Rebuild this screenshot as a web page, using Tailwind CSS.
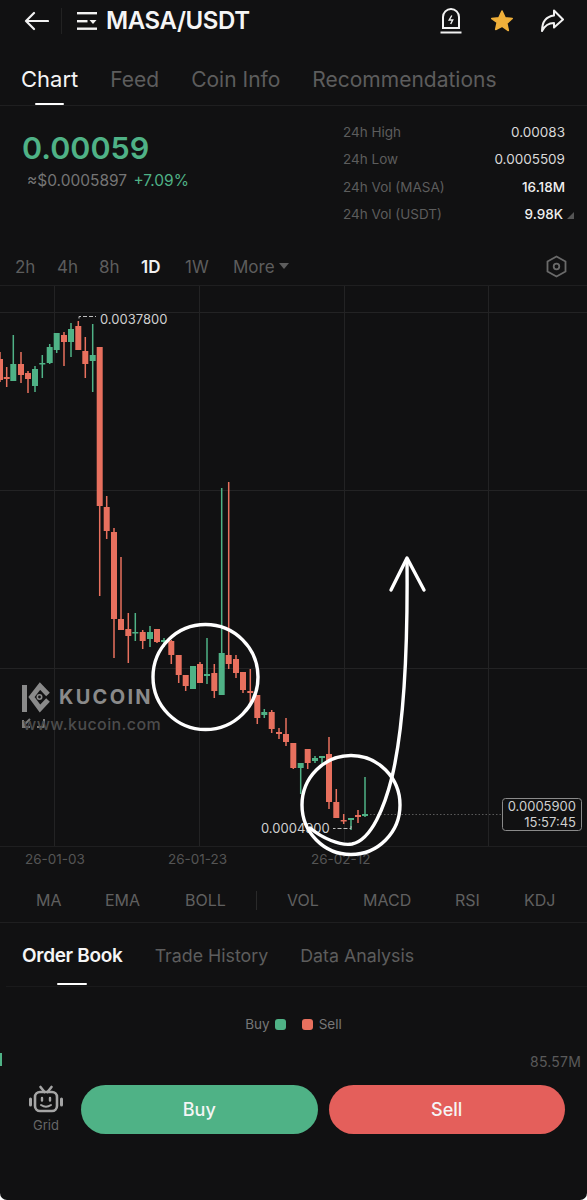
<!DOCTYPE html>
<html lang="en">
<head>
  <meta charset="UTF-8" />
  <meta name="viewport" content="width=device-width, initial-scale=1.0"/>
  <title>MASA/USDT</title>
  <script src="https://cdn.jsdelivr.net/npm/@tailwindcss/browser@4"></script>
</head>
<body class="bg-white text-white font-[Inter,sans-serif]">
<div class="w-[587px] h-[1200px] overflow-hidden flex flex-col bg-[#111112] rounded-b-[7px]">

  <!-- Header -->
  <header class="h-[42px] flex items-center pl-[24px] pr-[23px]">
    <svg class="w-[25px] h-[20px]" viewBox="0 0 25 20" fill="none" stroke="#f2f2f2" stroke-width="2.2" stroke-linecap="round" stroke-linejoin="round"><path d="M24 10H2M10 2l-8 8 8 8"/></svg>
    <div class="w-px h-[26px] bg-[#222] ml-[12px] mr-[15px]"></div>
    <svg class="w-[20px] h-[20px]" viewBox="0 0 20 20" fill="#f2f2f2"><rect x="0" y="1" width="20" height="2.4"/><rect x="0" y="9" width="10.5" height="2.4"/><path d="M12.5 9h7l-3.500 4z"/><rect x="0" y="16.500" width="20" height="2.4"/></svg>
    <h1 class="ml-[9px] text-[24px] font-semibold tracking-[-0.4px] text-[#f5f5f5]">MASA/USDT</h1>
    <div class="ml-auto flex items-center gap-[27px]">
      <svg class="w-[22px] h-[26px]" viewBox="0 0 22 26" fill="none" stroke="#f2f2f2" stroke-width="2"><path d="M3 20V9a8 8 0 0 1 16 0v11z"/><path d="M0.500 24.500h21"/><path d="M11.800 7.500 9.200 12h3.500l-2 4" stroke-width="1.400"/></svg>
      <svg class="w-[24px] h-[24px] ml-[1px]" viewBox="0 0 24 24" fill="#f0b03a" stroke="#f0b03a" stroke-width="1.600" stroke-linejoin="round"><path d="M12 2l3 6.700 7.200.8-5.400 4.800 1.500 7.200L12 17.200l-6.300 3.300 1.500-7.200L1.800 9.500 9 8.700z"/></svg>
      <svg class="w-[24px] h-[24px] -ml-[1px]" viewBox="0 0 24 24" fill="none" stroke="#f2f2f2" stroke-width="2" stroke-linejoin="round"><path d="M14 1.500l9 9-9 8v-4.500c-5 0-9 2-12 8 0-9 4-14.500 12-15.500z"/></svg>
    </div>
  </header>

  <!-- Tabs -->
  <nav class="h-[64px] border-b border-[#1f1f20] pl-[21px] flex gap-[32px] text-[21px] text-[#5d5d5d]">
    <div class="relative pt-[21px] text-[22px] text-[#f5f5f5]">Chart<div class="absolute left-[14px] bottom-0 w-[29px] h-[2.5px] bg-white rounded-full"></div></div>
    <div class="pt-[22px]">Feed</div>
    <div class="pt-[22px]">Coin Info</div>
    <div class="pt-[22px]">Recommendations</div>
  </nav>

  <!-- Price and stats -->
  <section class="h-[141px] flex justify-between pl-[22px] pr-[22px] pt-[13px]">
    <div>
      <div class="text-[30.500px] leading-[46px] font-semibold text-[#4fb286] mt-[6px]">0.00059</div>
      <div class="text-[15.500px] leading-[24px] ml-[5px] -mt-[2px] text-[#757575]">≈$0.0005897 <span class="text-[#4fb286] ml-[2px]">+7.09%</span></div>
    </div>
    <div class="w-[222px] text-[13.500px] leading-[27.400px]">
      <div class="flex justify-between text-[#5d5d5d]">24h High<span class="text-[#d9d9d9]">0.00083</span></div>
      <div class="flex justify-between text-[#5d5d5d]">24h Low<span class="text-[#d9d9d9]">0.0005509</span></div>
      <div class="flex justify-between text-[#5d5d5d]">24h Vol (MASA)<span class="text-[#f0f0f0] font-medium">16.18M</span></div>
      <div class="relative flex justify-between text-[#5d5d5d]">24h Vol (USDT)<span class="text-[#f0f0f0] font-medium pr-[2px]">9.98K</span>
        <div class="absolute right-[-9px] top-[11px] w-0 h-0 border-l-[7px] border-l-transparent border-b-[7px] border-b-[#555]"></div>
      </div>
    </div>
  </section>

  <!-- Timeframes -->
  <div class="h-[39px] pt-[8px] border-b border-[#1f1f20] flex items-start pl-[15px] pr-[20px] text-[17px] leading-[24px] text-[#5d5d5d]">
    <span class="w-[42px]">2h</span>
    <span class="w-[42px]">4h</span>
    <span class="w-[42px]">8h</span>
    <span class="w-[44px] text-[#f0f0f0] font-semibold">1D</span>
    <span class="w-[48px]">1W</span>
    <span>More</span>
    <div class="ml-[4px] mt-[8px] w-0 h-0 border-x-[5px] border-x-transparent border-t-[6px] border-t-[#5d5d5d]"></div>
    <svg class="ml-auto w-[21px] h-[23px]" viewBox="0 0 21 23" fill="none" stroke="#6a6a6a" stroke-width="1.800"><path d="M10.500 1.500l9 5v10l-9 5-9-5v-10z"/><circle cx="10.500" cy="11.500" r="2.800"/></svg>
  </div>

  <!-- Chart -->
  <div class="relative z-10 h-[561px] border-b border-[#1f1f20]">
    <svg id="chart" class="block w-[587px] h-[560px] overflow-visible" viewBox="0 286 587 560" xmlns="http://www.w3.org/2000/svg">
      <g stroke="#232324" stroke-width="1">
        <path d="M0 312.500H587M0 490.500H587M0 668.500H587M54.500 286V846M199.500 286V846M344.500 286V846M488.500 286V846"/>
      </g>
      <!-- Watermark -->
      <g fill="none" stroke="#8a8a8a" stroke-width="5">
        <path d="M24.500 685V712"/>
        <path d="M48 694.500L40 686L31.500 697L40 708.500L48 700"/>
      </g>
      <circle cx="39.500" cy="697" r="2.200" fill="none" stroke="#8a8a8a" stroke-width="1.600"/>
      <path d="M30 719l-7 7M23 720v7h7M44 719v7a1 1 0 0 1-1 1h-6" fill="none" stroke="#7a7a7a" stroke-width="2"/>
      <text x="59" y="704" font-size="20" font-weight="700" letter-spacing="2.300" fill="#8a8a8a">KUCOIN</text>
      <text x="23" y="730" font-size="16" font-weight="500" letter-spacing="0.400" fill="#4c4c4c">www.kucoin.com</text>
      <g id="candles"></g>
      <!-- Price marks -->
      <path d="M79 318.500V316.500H96" fill="none" stroke="#bdbdbd" stroke-dasharray="4 2"/>
      <text x="100" y="324" font-size="13" fill="#d0d0d0">0.0037800</text>
      <path d="M351 826V828.500H333" fill="none" stroke="#bdbdbd" stroke-dasharray="4 2"/>
      <text x="261" y="833" font-size="13" fill="#d0d0d0">0.0004900</text>
      <path d="M370 814.500H502" stroke="#5a5a5a" stroke-dasharray="1.500 2"/>
      <rect x="502.500" y="798.500" width="79" height="32" rx="3" fill="#111112" stroke="#8a8a8a"/>
      <text x="576" y="811" font-size="13" text-anchor="end" fill="#d0d0d0">0.0005900</text>
      <text x="576" y="827" font-size="13" text-anchor="end" fill="#d0d0d0">15:57:45</text>
      <!-- Hand drawn marks -->
      <g fill="none" stroke="#ffffff" stroke-width="3.400" stroke-linecap="round" stroke-linejoin="round">
        <circle cx="205.500" cy="677" r="52.500"/>
        <ellipse cx="351" cy="805" rx="49" ry="49.500"/>
        <path d="M310 828C322 838 340 846 352 844C372 840 385 805 392 777C402 735 408 660 407 560"/>
        <path d="M391 590L407 558L424 590"/>
      </g>
    </svg>
  </div>

  <!-- Date axis -->
  <div class="h-[24px] flex items-center pl-[25px] gap-[83px] text-[13.500px] text-[#555]">
    <span class="w-[60px]">26-01-03</span>
    <span class="w-[60px]">26-01-23</span>
    <span class="w-[60px]">26-02-12</span>
  </div>

  <!-- Indicators -->
  <div class="h-[52px] border-b border-[#1f1f20] text-[16px] text-[#606060]">
    <div class="flex items-center h-[34px] mt-[12px] pl-[36px]">
      <span class="w-[69px]">MA</span>
      <span class="w-[80px]">EMA</span>
      <span class="w-[71px]">BOLL</span>
      <div class="w-px h-[19px] bg-[#2a2a2a] mr-[30px]"></div>
      <span class="w-[76px]">VOL</span>
      <span class="w-[92px]">MACD</span>
      <span class="w-[69px]">RSI</span>
      <span>KDJ</span>
    </div>
  </div>

  <!-- Book tabs -->
  <nav class="h-[64px] ml-[6px] border-b border-[#1a1a1b] pl-[16px] flex gap-[32px] text-[17.800px] text-[#5d5d5d]">
    <div class="relative pt-[19px] text-[19px] font-semibold text-[#f5f5f5] tracking-[-0.3px]">Order Book<div class="absolute left-[35px] bottom-[1px] w-[30px] h-[2.500px] bg-white rounded-full"></div></div>
    <div class="pt-[20px]">Trade History</div>
    <div class="pt-[20px]">Data Analysis</div>
  </nav>

  <!-- Legend -->
  <div class="h-[40px] mt-[17px] flex items-center justify-center text-[13.500px] text-[#777]">
    <span>Buy</span>
    <div class="w-[11px] h-[11px] rounded-[3px] bg-[#4fb286] ml-[5px] mr-[16px]"></div>
    <div class="w-[11px] h-[11px] rounded-[3px] bg-[#e8705e] mr-[6px]"></div>
    <span>Sell</span>
  </div>

  <!-- Depth edge -->
  <div class="relative h-[20px] mt-[8px] text-right pr-[6px] text-[14px] leading-[20px] tracking-[0.2px] text-[#5a5a5a]">
    85.57M
    <div class="absolute left-0 top-[1px] w-[2px] h-[13px] bg-[#4fb286]"></div>
  </div>

  <!-- Actions -->
  <div class="mt-[13px] flex items-start pl-[29px] pr-[22px]">
    <div class="w-[34px] mr-[18px] flex flex-col items-center">
      <svg class="w-[34px] h-[28px]" viewBox="0 0 34 28" fill="none" stroke="#a5a5a5" stroke-width="2.600" stroke-linecap="round" stroke-linejoin="round">
        <rect x="6" y="7" width="22" height="19" rx="5"/>
        <path d="M11.500 2l4 5M22.500 2l-4 5"/>
        <path d="M1.500 14v6M32.500 14v6" stroke-width="3"/>
        <path d="M13 13v2.500M21 13v2.500" stroke-width="2.400"/>
        <path d="M12 20c3 2 7 2 10 0" stroke-width="2"/>
      </svg>
      <span class="text-[13px] leading-[16px] mt-[4px] text-[#666]">Grid</span>
    </div>
    <div class="flex-1 flex gap-[11px]">
      <button class="flex-1 h-[49px] rounded-full bg-[#4fb286] text-[18px] font-medium text-[#f5f5f5]">Buy</button>
      <button class="flex-1 h-[49px] rounded-full bg-[#e45f5b] text-[18px] font-medium text-[#f5f5f5]">Sell</button>
    </div>
  </div>
</div>

<script>
  // x, wick top, wick bottom, body top, body bottom, up
  const candles = [
    [0,352,382,359,380,0],[6.7,367,387,377,379,0],[13.3,335,381,364,381,1],[21,352,383,364,375,0],
    [28,371,393,373,379,0],[35,366,392,369,386,1],[42.3,355,378,363,364.500,1],[49.7,344,364,347,363,1],
    [56.7,333,353,333,350,1],[64,332,366,335,342,0],[71,323,357,329,342,1],[78.3,321,350,326,350,0],
    [85.3,337,378,351,364,0],[92.7,324,392,355,361,1],[99.7,347,596,347,506,0],[106.7,496,539,507,531,0],
    [114,528,658,532,619,0],[121,557,630,619,630,0],[128.3,613,663,629,636,0],[135.3,613,641,632,633.500,1],
    [142.7,630,649,632,641,0],[150,626,647,632,639,1],[157,629,643,629,642,0],[164,638,647,640,642,1],
    [171.3,640,664,641,655,0],[178.7,655,683,655,675,0],[185.7,675,691,675,686,0],[193,666,689,666,689,1],
    [200,662,683,664,683,0],[207,638,684,674,676,1],[214.3,664,698,673,691,0],[221.7,488,695,653,695,1],
    [228.7,482,669,655,664,0],[236,655,678,659,673,0],[243,672,693,672,690,0],[250.3,669,702,691,693,0],
    [257.3,695,724,695,718,0],[264.3,709,718,712,715,1],[271.7,710,733,712,729,0],[279,728,739,732,734,0],
    [286,718,746,734,742,0],[293.3,743,769,743,768,0],[300.7,763,794,763,768,1],[307.7,749,769,749,763,0],
    [315,756,763,758,761,1],[322,756,763,756,758,1],[329,737,809,754,802,0],[336.3,789,818,802,818,0],
    [343.7,814,824,820,821.500,0],[351,818,830,818,820,1],[358,810,823,815,817,0],[365,777,817,814,816,1]
  ];
  const group = document.getElementById('candles');
  const addRect = (x, y, w, h, fill) => {
    const r = document.createElementNS('http://www.w3.org/2000/svg', 'rect');
    r.setAttribute('x', x); r.setAttribute('y', y);
    r.setAttribute('width', w); r.setAttribute('height', h);
    r.setAttribute('fill', fill);
    group.appendChild(r);
  };
  candles.forEach(([x, wt, wb, bt, bb, up]) => {
    const color = up ? '#4fb286' : '#e8705e';
    addRect(x - 0.75, wt, 1.5, wb - wt, color);
    addRect(x - 3, bt, 6, bb - bt, color);
  });
</script>
</body>
</html>
